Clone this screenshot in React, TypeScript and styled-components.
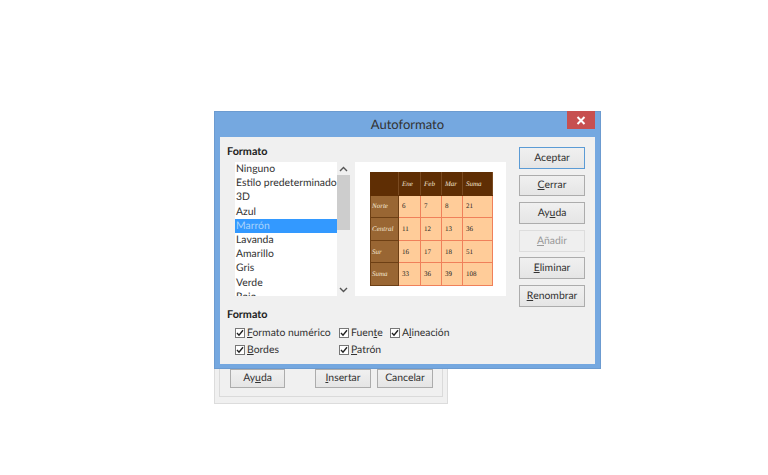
import React from 'react'
import styled, { createGlobalStyle } from 'styled-components'

const UI_FONT = `"Lato", "Open Sans", sans-serif`

const styles = ['Ninguno', 'Estilo predeterminado', '3D', 'Azul', 'Marrón', 'Lavanda', 'Amarillo', 'Gris', 'Verde', 'Rojo']

const tableRows = [
  { label: 'Norte', values: [6, 7, 8, 21] },
  { label: 'Central', values: [11, 12, 13, 36] },
  { label: 'Sur', values: [16, 17, 18, 51] },
  { label: 'Suma', values: [33, 36, 39, 108] },
]

const App: React.FC = () => {
  return (
    <Desktop>
      <GlobalStyle />
      <BackWindow>
        <BackFrame>
          <BackButton $width={55}>Ay<u>u</u>da</BackButton>
          <BackSpacer />
          <BackButton $width={56}><u>I</u>nsertar</BackButton>
          <BackButton $width={56}>Cancelar</BackButton>
        </BackFrame>
      </BackWindow>

      <Window>
        <TitleBar>
          Autoformato
          <CloseButton>
            <svg width="10" height="9" viewBox="0 0 10 9">
              <path d="M1.5 1 L8.5 8 M8.5 1 L1.5 8" stroke="#fff" strokeWidth="2" />
            </svg>
          </CloseButton>
        </TitleBar>

        <Client>
          <TopRow>
            <LeftColumn>
              <SectionLabel>Formato</SectionLabel>
              <PickerRow>
                <ListBox>
                  <ListItems>
                    {styles.map(name => (
                      <ListItem key={name} $selected={name === 'Marrón'}>{name}</ListItem>
                    ))}
                  </ListItems>
                  <ScrollBar>
                    <ScrollArrow>
                      <svg width="9" height="6" viewBox="0 0 9 6">
                        <path d="M1 5 L4.5 1.5 L8 5" fill="none" stroke="#555" strokeWidth="1.4" />
                      </svg>
                    </ScrollArrow>
                    <ScrollTrack>
                      <ScrollThumb />
                    </ScrollTrack>
                    <ScrollArrow>
                      <svg width="9" height="6" viewBox="0 0 9 6">
                        <path d="M1 1 L4.5 4.5 L8 1" fill="none" stroke="#555" strokeWidth="1.4" />
                      </svg>
                    </ScrollArrow>
                  </ScrollBar>
                </ListBox>

                <Preview>
                  <PreviewTable>
                    <colgroup>
                      <col style={{ width: 28 }} />
                      <col style={{ width: 22 }} />
                      <col style={{ width: 21 }} />
                      <col style={{ width: 21 }} />
                      <col style={{ width: 30 }} />
                    </colgroup>
                    <thead>
                      <TableRow>
                        <HeadCell />
                        <HeadCell>Ene</HeadCell>
                        <HeadCell>Feb</HeadCell>
                        <HeadCell>Mar</HeadCell>
                        <HeadCell>Suma</HeadCell>
                      </TableRow>
                    </thead>
                    <tbody>
                      {tableRows.map(row => (
                        <TableRow key={row.label}>
                          <RowHead>{row.label}</RowHead>
                          {row.values.map(value => (
                            <DataCell key={value}>{value}</DataCell>
                          ))}
                        </TableRow>
                      ))}
                    </tbody>
                  </PreviewTable>
                </Preview>
              </PickerRow>
            </LeftColumn>

            <ButtonColumn>
              <ActionButton $primary>Aceptar</ActionButton>
              <ActionButton><u>C</u>errar</ActionButton>
              <ActionButton>Ay<u>u</u>da</ActionButton>
              <ActionButton disabled><u>A</u>ñadir</ActionButton>
              <ActionButton><u>E</u>liminar</ActionButton>
              <ActionButton><u>R</u>enombrar</ActionButton>
            </ButtonColumn>
          </TopRow>

          <OptionsSection>
            <SectionLabel>Formato</SectionLabel>
            <OptionsGrid>
              <Option><CheckBox /><span><u>F</u>ormato numérico</span></Option>
              <Option><CheckBox /><span>Fuen<u>t</u>e</span></Option>
              <Option><CheckBox /><span>A<u>l</u>ineación</span></Option>
              <Option><CheckBox /><span><u>B</u>ordes</span></Option>
              <Option><CheckBox /><span><u>P</u>atrón</span></Option>
            </OptionsGrid>
          </OptionsSection>
        </Client>
      </Window>
    </Desktop>
  )
}

const CheckBox: React.FC = () => (
  <StyledCheckBox>
    <svg width="8" height="8" viewBox="0 0 8 8">
      <path d="M1 4 L3 6.2 L7 1.2" fill="none" stroke="#222" strokeWidth="1.4" />
    </svg>
  </StyledCheckBox>
)

const GlobalStyle = createGlobalStyle`
  html, body {
    margin: 0;
    padding: 0;
    background: #fff;
  }
`

const Desktop = styled.div`
  position: relative;
  width: 768px;
  height: 475px;
  overflow: hidden;
  background: #fff;
  font-family: ${UI_FONT};
  color: #222;
  text-rendering: geometricPrecision;
`

const BackWindow = styled.div`
  position: absolute;
  left: 214px;
  top: 300px;
  width: 234px;
  height: 104px;
  box-sizing: border-box;
  padding: 0 4px 6px 4px;
  display: flex;
  background: #f0f0f0;
  border: 1px solid #dcdcdc;
`

const BackFrame = styled.div`
  flex: 1;
  display: flex;
  align-items: flex-end;
  gap: 6px;
  box-sizing: border-box;
  padding: 0 9px 8px 10px;
  border: 1px solid #dadada;
  border-top: none;
`

const BackSpacer = styled.div`
  width: 18px;
`

const BackButton = styled.div<{ $width: number }>`
  width: ${props => props.$width}px;
  height: 19px;
  box-sizing: border-box;
  padding-bottom: 1px;
  display: flex;
  align-items: center;
  justify-content: center;
  font-size: 10.4px;
  color: #333;
  background: linear-gradient(#f0f0f0, #e5e5e5);
  border: 1px solid #acacac;
`

const Window = styled.div`
  position: absolute;
  left: 214px;
  top: 111px;
  width: 387px;
  height: 258px;
  box-sizing: border-box;
  padding: 0 6px 5px 6px;
  display: flex;
  flex-direction: column;
  background: #75a8e0;
  box-shadow: 0 0 0 1px #6c9bd0 inset;
`

const TitleBar = styled.div`
  position: relative;
  height: 26px;
  flex: none;
  display: flex;
  align-items: center;
  justify-content: center;
  font-size: 13px;
  color: #333;
`

const CloseButton = styled.div`
  position: absolute;
  right: 0;
  top: 0;
  width: 28px;
  height: 18px;
  display: flex;
  align-items: center;
  justify-content: center;
  background: #c75050;
`

const Client = styled.div`
  flex: 1;
  display: flex;
  flex-direction: column;
  box-sizing: border-box;
  padding: 7px 10px 0 7px;
  background: #f0f0f0;
`

const TopRow = styled.div`
  display: flex;
  justify-content: space-between;
`

const LeftColumn = styled.div`
  display: flex;
  flex-direction: column;
`

const SectionLabel = styled.div`
  height: 15px;
  line-height: 15px;
  font-size: 10.8px;
  font-weight: 700;
  color: #222;
`

const PickerRow = styled.div`
  display: flex;
  gap: 5px;
  margin-top: 3px;
  margin-left: 8px;
`

const ListBox = styled.div`
  display: flex;
  width: 115px;
  height: 134px;
  overflow: hidden;
  background: #fff;
`

const ListItems = styled.div`
  width: 102px;
  height: 134px;
  overflow: hidden;
  flex: none;
`

const ListItem = styled.div<{ $selected?: boolean }>`
  height: 14.2px;
  line-height: 15px;
  padding-left: 1px;
  font-size: 10.4px;
  white-space: nowrap;
  color: ${props => (props.$selected ? '#a9d3fb' : '#333')};
  background: ${props => (props.$selected ? '#3399ff' : 'transparent')};
`

const ScrollBar = styled.div`
  width: 13px;
  flex: none;
  display: flex;
  flex-direction: column;
  background: #f0f0f0;
`

const ScrollArrow = styled.div`
  height: 13px;
  flex: none;
  display: flex;
  align-items: center;
  justify-content: center;
`

const ScrollTrack = styled.div`
  flex: 1;
`

const ScrollThumb = styled.div`
  height: 55px;
  background: #cdcdcd;
`

const Preview = styled.div`
  width: 151px;
  height: 134px;
  box-sizing: border-box;
  padding: 10px 14px 0 15px;
  background: #fff;
`

const PreviewTable = styled.table`
  table-layout: fixed;
  width: 122px;
  border-collapse: collapse;
  font-family: "Liberation Serif", serif;
  font-size: 7px;
`

const TableRow = styled.tr`
  height: 22.6px;
`

const HeadCell = styled.th`
  padding: 0 0 0 3px;
  text-align: left;
  font-weight: 400;
  font-style: italic;
  color: #f5e6d5;
  background: #5f2e04;
  border: 1px solid #5f2e04;
  border-right-color: #7a4a20;
`

const RowHead = styled.th`
  padding: 0 0 0 1px;
  text-align: left;
  font-weight: 400;
  font-style: italic;
  color: #f5e6d5;
  background: #996633;
  border: 1px solid #6d3f14;
`

const DataCell = styled.td`
  padding: 0 0 0 3px;
  color: #222;
  background: #ffcc99;
  border: 1px solid #f0805a;
`

const ButtonColumn = styled.div`
  display: flex;
  flex-direction: column;
  gap: 5.8px;
  margin-top: 3px;
`

const ActionButton = styled.div<{ $primary?: boolean; disabled?: boolean }>`
  width: 66px;
  height: 21.8px;
  box-sizing: border-box;
  display: flex;
  align-items: center;
  justify-content: center;
  font-size: 10.4px;
  color: ${props => (props.disabled ? '#9a9a9a' : '#333')};
  background: ${props => (props.disabled ? '#efefef' : 'linear-gradient(#f0f0f0, #e5e5e5)')};
  border: 1px solid ${props => (props.$primary ? '#5b9bd5' : props.disabled ? '#dddddd' : '#acacac')};
`

const OptionsSection = styled.div`
  display: flex;
  flex-direction: column;
`

const OptionsGrid = styled.div`
  display: grid;
  grid-template-columns: 104px 51px auto;
  grid-auto-rows: 17px;
  margin: 3px 0 0 8px;
`

const Option = styled.div`
  display: flex;
  align-items: center;
  gap: 2px;
  font-size: 10.4px;
  color: #333;
  white-space: nowrap;
`

const StyledCheckBox = styled.div`
  width: 10px;
  height: 10px;
  box-sizing: border-box;
  display: flex;
  align-items: center;
  justify-content: center;
  background: #fff;
  border: 1px solid #777;
`

export default App
